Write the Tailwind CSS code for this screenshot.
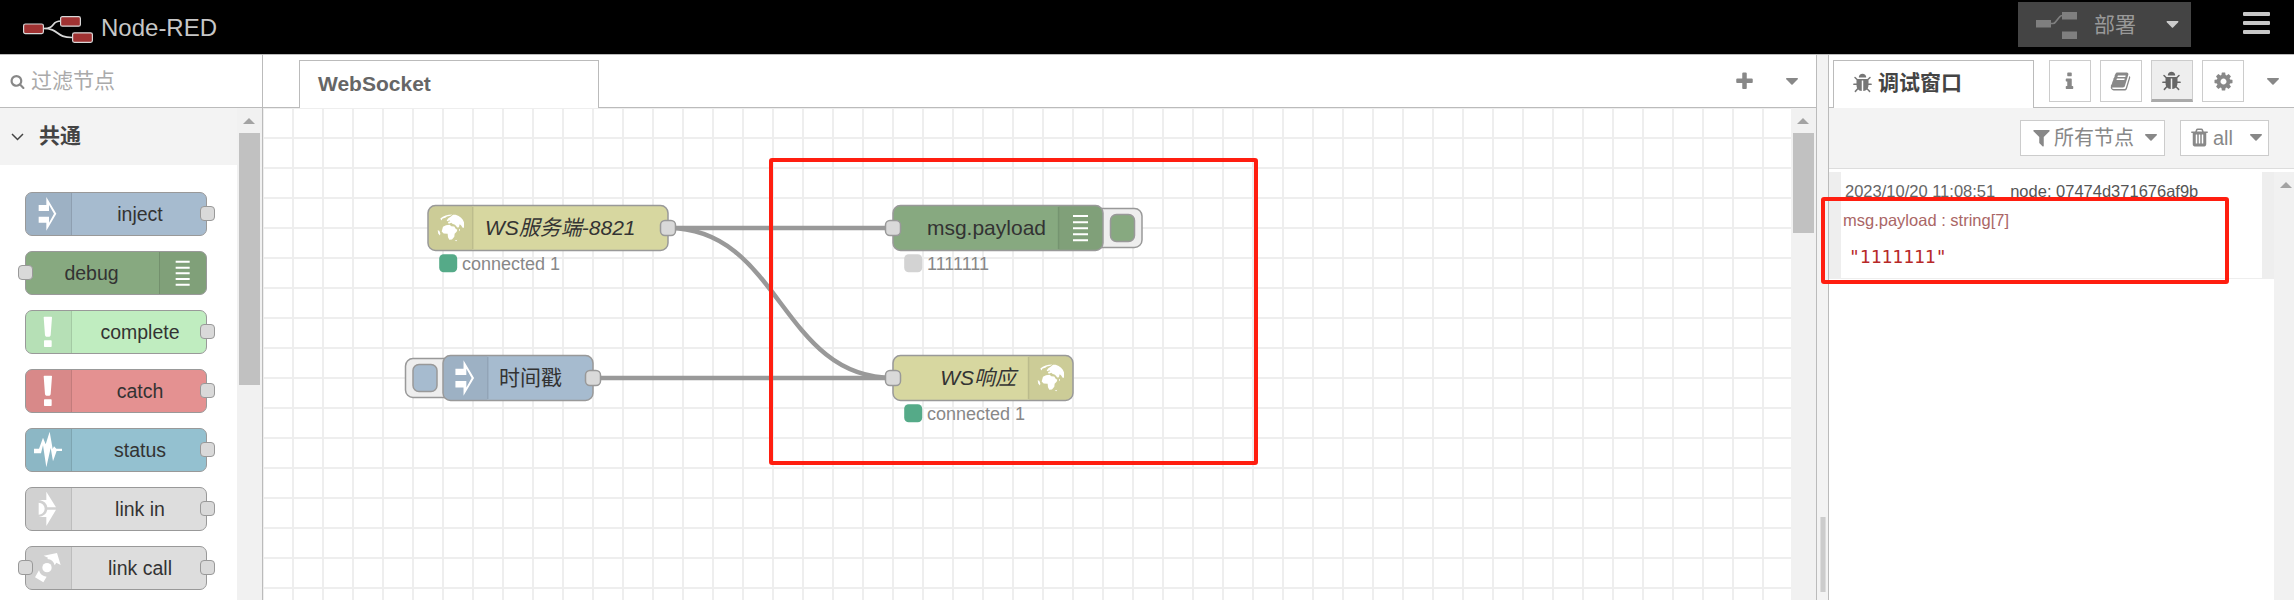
<!DOCTYPE html>
<html lang="zh-CN">
<head>
<meta charset="utf-8">
<title>Node-RED</title>
<script src="https://cdn.jsdelivr.net/npm/@tailwindcss/browser@4"></script>
</head>
<body class="w-[2294px] h-[600px] overflow-hidden bg-white font-['Liberation_Sans','Noto_Sans_CJK_SC',sans-serif] text-[21px] text-[#888]">

<!-- shared icon shapes -->
<svg class="hidden">
  <symbol id="search" viewBox="0 0 1792 1792"><path d="M1216 832q0-185-131.5-316.5t-316.5-131.5-316.5 131.5-131.5 316.5 131.5 316.5 316.5 131.5 316.5-131.5 131.5-316.5zm512 832q0 52-38 90t-90 38q-54 0-90-38l-343-342q-179 124-399 124-143 0-273.5-55.5t-225-150-150-225-55.5-273.5 55.5-273.5 150-225 225-150 273.5-55.5 273.5 55.5 225 150 150 225 55.5 273.5q0 220-124 399l343 343q37 37 37 90z"/></symbol>
  <symbol id="bug" viewBox="0 0 1792 1792"><path d="M1696 960q0 26-19 45t-45 19h-224q0 171-67 290l208 209q19 19 19 45t-19 45q-18 19-45 19t-45-19l-198-197q-5 5-15 13t-42 28.5-65 36.5-82 29-97 13v-896h-128v896q-51 0-101.5-13.5t-87-33-66-39-43.5-32.5l-15-14-183 207q-20 21-48 21-24 0-43-16-19-18-20.5-44.5t15.5-46.5l202-227q-58-114-58-274h-224q-26 0-45-19t-19-45 19-45 45-19h224v-294l-173-173q-19-19-19-45t19-45 45-19 45 19l173 173h844l173-173q19-19 45-19t45 19 19 45-19 45l-173 173v294h224q26 0 45 19t19 45zm-480-576h-640q0-133 93.5-226.5t226.5-93.5 226.5 93.5 93.5 226.5z"/></symbol>
  <symbol id="cog" viewBox="0 0 1792 1792"><path d="M1152 896q0-106-75-181t-181-75-181 75-75 181 75 181 181 75 181-75 75-181zm512-109v222q0 12-8 23t-20 13l-185 28q-19 54-39 91 35 50 107 138 10 12 10 25t-9 23q-27 37-99 108t-94 71q-12 0-26-9l-138-108q-44 23-91 38-16 136-29 186-7 28-36 28h-222q-14 0-24.5-8.5t-11.5-21.5l-28-184q-49-16-90-37l-141 107q-10 9-25 9-14 0-25-11-126-114-165-168-7-10-7-23 0-12 8-23 15-21 51-66.5t54-70.5q-27-50-41-99l-183-27q-13-2-21-12.5t-8-23.5v-222q0-12 8-23t19-13l186-28q14-46 39-92-40-57-107-138-10-12-10-24 0-10 9-23 26-36 98.5-107.5t94.5-71.5q13 0 26 10l138 107q44-23 91-38 16-136 29-186 7-28 36-28h222q14 0 24.5 8.5t11.5 21.5l28 184q49 16 90 37l142-107q9-9 24-9 13 0 25 10 129 119 165 170 7 8 7 22 0 12-8 23-15 21-51 66.5t-54 70.5q26 50 41 98l183 28q13 2 21 12.5t8 23.5z"/></symbol>
  <symbol id="info" viewBox="0 0 1792 1792"><path d="M1216 1344v128q0 26-19 45t-45 19h-512q-26 0-45-19t-19-45v-128q0-26 19-45t45-19h64v-384h-64q-26 0-45-19t-19-45v-128q0-26 19-45t45-19h384q26 0 45 19t19 45v576h64q26 0 45 19t19 45zm-128-1152v192q0 26-19 45t-45 19h-256q-26 0-45-19t-19-45v-192q0-26 19-45t45-19h256q26 0 45 19t19 45z"/></symbol>
  <symbol id="book" viewBox="0 0 1792 1792"><path d="M1703 478q40 57 18 129l-275 906q-19 64-76.5 107.5t-122.5 43.5h-923q-77 0-148.5-53.5t-99.5-131.5q-24-67-2-127 0-4 3-27t4-37q1-8-3-21.5t-3-19.5q2-11 8-21t16.5-23.5 16.5-23.5q23-38 45-91.5t30-91.5q3-10 .5-30t-.5-28q3-11 17-28t17-23q21-36 42-92t25-90q1-9-2.5-32t.5-28q4-13 22-30.5t22-22.5q19-26 42.5-84.5t27.5-96.5q1-8-3-25.5t-2-26.5q2-8 9-18t18-23 17-21q8-12 16.5-30.5t15-35 16-36 19.5-32 26.5-23.5 36-11.5 47.5 5.5l-1 3q38-9 51-9h761q74 0 114 56t18 130l-274 906q-36 119-71.5 153.5t-128.5 34.5h-869q-27 0-38 15-11 16-1 43 24 70 144 70h923q29 0 56-15.5t35-41.5l300-987q7-22 5-57 38 15 59 43zm-1064 2q-4 13 2 22.5t20 9.5h608q13 0 25.5-9.5t16.5-22.5l21-64q4-13-2-22.5t-20-9.5h-608q-13 0-25.5 9.5t-16.5 22.5zm-83 256q-4 13 2 22.5t20 9.5h608q13 0 25.5-9.5t16.5-22.5l21-64q4-13-2-22.5t-20-9.5h-608q-13 0-25.5 9.5t-16.5 22.5z"/></symbol>
  <symbol id="filter" viewBox="0 0 1792 1792"><path d="M1595 295q17 41-14 70l-493 493v742q0 42-39 59-13 5-25 5-27 0-45-19l-256-256q-19-19-19-45v-486l-493-493q-31-29-14-70 17-39 59-39h1280q42 0 59 39z"/></symbol>
  <symbol id="trash" viewBox="0 0 1792 1792"><path d="M704 1376v-704q0-14-9-23t-23-9h-64q-14 0-23 9t-9 23v704q0 14 9 23t23 9h64q14 0 23-9t9-23zm256 0v-704q0-14-9-23t-23-9h-64q-14 0-23 9t-9 23v704q0 14 9 23t23 9h64q14 0 23-9t9-23zm256 0v-704q0-14-9-23t-23-9h-64q-14 0-23 9t-9 23v704q0 14 9 23t23 9h64q14 0 23-9t9-23zm-544-992h448l-48-117q-7-9-17-11h-317q-10 2-17 11zm928 32v64q0 14-9 23t-23 9h-96v948q0 83-47 143.5t-113 60.5h-832q-66 0-113-58.5t-47-141.5v-952h-96q-14 0-23-9t-9-23v-64q0-14 9-23t23-9h309l70-167q15-37 54-63t79-26h320q40 0 79 26t54 63l70 167h309q14 0 23 9t9 23z"/></symbol>
  <symbol id="plus" viewBox="0 0 1792 1792"><path d="M1600 736v192q0 40-28 68t-68 28h-416v416q0 40-28 68t-68 28h-192q-40 0-68-28t-28-68v-416h-416q-40 0-68-28t-28-68v-192q0-40 28-68t68-28h416v-416q0-40 28-68t68-28h192q40 0 68 28t28 68v416h416q40 0 68 28t28 68z"/></symbol>
  <symbol id="caret" viewBox="0 0 12 7"><path d="M.6 0h10.8q.9.5.3 1.2L6.6 6.5q-.6.6-1.2 0L.3 1.2Q-.3.5.6 0z"/></symbol>
  <symbol id="up" viewBox="0 0 12 6"><path d="M6 0l6 6H0z"/></symbol>
  <!-- node icons, 135x132 units per 45x44 box -->
  <symbol id="n-inject" viewBox="0 0 135 132"><path d="M41 39h23V15l30 50-30 51V92H41V74h31v18l15-27-15-26v18H41z"/></symbol>
  <symbol id="n-debug" viewBox="0 0 135 132"><path d="M44 29h42v6H44zM44 47h42v6H44zM44 64h42v6H44zM44 81h42v6H44zM44 98h42v6H44z"/></symbol>
  <symbol id="n-alert" viewBox="0 0 135 132"><path d="M56 22q0-2 2-2h21q2 0 2 2l-4 54q-1 4-4 4h-9q-3 0-4-4zM59 91h19q2 0 2 2v16q0 2-2 2H59q-2 0-2-2V93q0-2 2-2z"/></symbol>
  <symbol id="n-status" viewBox="0 0 135 132"><path d="M27 62h15l12-33 8 20 12-38 9 52 4-8 7 7h17v7H95l-11 31-7-40-13 58-10-66-6 24H27z"/></symbol>
  <symbol id="n-linkin" viewBox="0 0 135 132"><path d="M64 14l29 47H67a27 27 0 0 0-21-21l-5-1h23zM41 47a18 18 0 0 1 0 36zM64 117l29-49H67a27 27 0 0 1-26 22h23z"/></symbol>
  <symbol id="n-linkcall" viewBox="0 0 135 132"><path d="M56 29l40-8 11 36-13-7-5 8a25 25 0 0 0-22-19l2-4zM42 73a25 25 0 0 0 23 19l-10 17-25-15z"/><circle cx="66" cy="65" r="14"/></symbol>
  <symbol id="n-globe" viewBox="0 0 82 86">
    <path d="M10 15Q24 3 46 3l-6 4-10 2-5 4-8 2-4 6z"/>
    <path d="M48 4h8q20 7 25 22 1 6 0 17h-4l-5-8-4-3-2 9-5 1-7-8-8-3-3-3-5 2-5-1 1-4 6-2-3-3-5 3-3-2 5-7 7-4z"/>
    <path d="M18 40l9-5 11-1 5 4 9 1 4 7 5 3-2 6-6 6-1 9-7 8-8 1-4-8-1-10-12-1-6-6z"/>
    <path d="M2 50l5 2 3 8-1 6-5-5zM53 82l8-3-3 4zM66 46l3 2-1 5-2-2z"/>
  </symbol>
</svg>

<header class="flex h-[54px] items-start justify-between bg-black">
  <div class="flex items-center pl-[23px] pt-[10px]">
    <svg class="mt-1 h-[28px] w-[71px]" viewBox="0 0 71 28"><path d="M20 12.5C34 12.5 27 5 38 5M20 12.5C37 12.5 32 21.500 49 21.500" fill="none" stroke="#d8d8d8" stroke-width="1.7"/><g fill="#a03232" stroke="#d8d8d8" stroke-width="1.200"><rect x=".6" y="8" width="19.800" height="9.600" rx="1.800"/><rect x="37.600" y=".6" width="19.800" height="9.600" rx="1.800"/><rect x="49.600" y="16.800" width="19.800" height="9.600" rx="1.800"/></g></svg>
    <span class="mt-[1px] ml-[7px] text-[24px] leading-[34px] text-[#c7c7c7]">Node-RED</span>
  </div>
  <div class="flex pt-[2px]">
    <div class="flex h-[45px] w-[173px] items-center bg-[#444] text-[#999]">
      <svg class="ml-[18px] h-[28px] w-[41px]" viewBox="0 0 41 28"><path d="M14 12.500h3q1.500 0 2.500-1.500l4-5q1-1.500 3-1.500h2" fill="none" stroke="#7f7f7f" stroke-width="1.700"/><path d="M0 9h15v7.500H0zM26 1h15v7.500H26zM26 20.500h15V28H26z" fill="#7f7f7f"/></svg>
      <span class="ml-[17px] leading-[30px]">部署</span>
      <svg class="ml-[30px] h-[7px] w-[13px] fill-[#ccc]"><use href="#caret"/></svg>
    </div>
    <div class="mr-[24px] ml-[52px] mt-[10px] flex w-[27px] flex-col gap-[5px]">
      <i class="h-[4px] rounded-[1px] bg-[#c7c7c7]"></i><i class="h-[4px] rounded-[1px] bg-[#c7c7c7]"></i><i class="h-[4px] rounded-[1px] bg-[#c7c7c7]"></i>
    </div>
  </div>
</header>

<main class="flex h-[546px] border-t border-[#bbb]">
  <!-- palette -->
  <aside class="flex w-[263px] flex-col border-r border-[#bbb]">
    <div class="flex h-[53px] items-center border-b border-[#bbb] pl-[10px]">
      <svg class="h-[15px] w-[15px] fill-[#888]"><use href="#search"/></svg>
      <span class="ml-[6px] leading-[30px] text-[#aaa]">过滤节点</span>
    </div>
    <div class="flex grow">
      <div class="w-[237px]">
        <div class="flex h-[57px] items-center bg-[#f3f3f3] pl-[11px]">
          <svg class="mt-[1px] h-[8px] w-[13px]" viewBox="0 0 13 8"><path d="M1 1l5.500 5.500L12 1" fill="none" stroke="#444" stroke-width="1.500"/></svg>
          <span class="-mt-[2px] ml-[15px] font-bold leading-[30px] text-[#444]">共通</span>
        </div>
        <div class="flex flex-col gap-[15px] pt-[27px] pl-[25px] text-[19.5px] leading-[42px] text-[#333]">
          <div class="relative flex h-[44px] w-[182px] rounded-[7px] border border-[#999] bg-[#a6bbcf]">
            <div class="w-[46px] rounded-l-[6px] border-r border-black/10 bg-black/5"><svg class="-mt-px -ml-px h-[44px] w-[45px] fill-white"><use href="#n-inject"/></svg></div>
            <span class="grow pr-[1px] pl-[3px] text-center">inject</span>
            <i class="absolute top-[13px] left-[174px] size-[15px] rounded-[4px] border border-[#999] bg-[#d9d9d9]"></i>
          </div>
          <div class="relative flex h-[44px] w-[182px] rounded-[7px] border border-[#999] bg-[#87a980]">
            <span class="grow pr-[2px] text-center">debug</span>
            <div class="w-[47px] rounded-r-[6px] border-l border-black/10 bg-black/5"><svg class="-mt-px ml-px h-[44px] w-[45px] fill-white"><use href="#n-debug"/></svg></div>
            <i class="absolute top-[13px] -left-[8px] size-[15px] rounded-[4px] border border-[#999] bg-[#d9d9d9]"></i>
          </div>
          <div class="relative flex h-[44px] w-[182px] rounded-[7px] border border-[#999] bg-[#c0edc0]">
            <div class="w-[46px] rounded-l-[6px] border-r border-black/10 bg-black/5"><svg class="-mt-px -ml-px h-[44px] w-[45px] fill-white"><use href="#n-alert"/></svg></div>
            <span class="grow pr-[1px] pl-[3px] text-center">complete</span>
            <i class="absolute top-[13px] left-[174px] size-[15px] rounded-[4px] border border-[#999] bg-[#d9d9d9]"></i>
          </div>
          <div class="relative flex h-[44px] w-[182px] rounded-[7px] border border-[#999] bg-[#e49191]">
            <div class="w-[46px] rounded-l-[6px] border-r border-black/10 bg-black/5"><svg class="-mt-px -ml-px h-[44px] w-[45px] fill-white"><use href="#n-alert"/></svg></div>
            <span class="grow pr-[1px] pl-[3px] text-center">catch</span>
            <i class="absolute top-[13px] left-[174px] size-[15px] rounded-[4px] border border-[#999] bg-[#d9d9d9]"></i>
          </div>
          <div class="relative flex h-[44px] w-[182px] rounded-[7px] border border-[#999] bg-[#94c1d0]">
            <div class="w-[46px] rounded-l-[6px] border-r border-black/10 bg-black/5"><svg class="-mt-px -ml-px h-[44px] w-[45px] fill-white"><use href="#n-status"/></svg></div>
            <span class="grow pr-[1px] pl-[3px] text-center">status</span>
            <i class="absolute top-[13px] left-[174px] size-[15px] rounded-[4px] border border-[#999] bg-[#d9d9d9]"></i>
          </div>
          <div class="relative flex h-[44px] w-[182px] rounded-[7px] border border-[#999] bg-[#ddd]">
            <div class="w-[46px] rounded-l-[6px] border-r border-black/10 bg-black/5"><svg class="-mt-px -ml-px h-[44px] w-[45px] fill-white"><use href="#n-linkin"/></svg></div>
            <span class="grow pr-[1px] pl-[3px] text-center">link in</span>
            <i class="absolute top-[13px] left-[174px] size-[15px] rounded-[4px] border border-[#999] bg-[#d9d9d9]"></i>
          </div>
          <div class="relative flex h-[44px] w-[182px] rounded-[7px] border border-[#999] bg-[#ddd]">
            <div class="w-[46px] rounded-l-[6px] border-r border-black/10 bg-black/5"><svg class="-mt-px -ml-px h-[44px] w-[45px] fill-white"><use href="#n-linkcall"/></svg></div>
            <span class="grow pr-[1px] pl-[3px] text-center">link call</span>
            <i class="absolute top-[13px] -left-[8px] size-[15px] rounded-[4px] border border-[#999] bg-[#d9d9d9]"></i>
            <i class="absolute top-[13px] left-[174px] size-[15px] rounded-[4px] border border-[#999] bg-[#d9d9d9]"></i>
          </div>
        </div>
      </div>
      <div class="flex w-[25px] flex-col bg-[#f1f1f1] pt-[10px] pl-[2px]">
        <svg class="ml-[4px] h-[6px] w-[12px] fill-[#a3a3a3]"><use href="#up"/></svg>
        <div class="mt-[9px] h-[252px] w-[21px] bg-[#c1c1c1]"></div>
      </div>
    </div>
  </aside>

  <!-- workspace -->
  <section class="flex w-[1554px] flex-col border-r border-[#bbb]">
    <div class="flex h-[53px] items-end">
      <div class="h-[53px] w-[36px] border-b border-[#bbb]"></div>
      <div class="h-[48px] w-[300px] border border-b-0 border-[#bbb] pl-[18px] font-bold leading-[45px] text-[#666]">WebSocket</div>
      <div class="flex h-[53px] grow items-center justify-end border-b border-[#bbb]">
        <svg class="mt-[1px] h-[21px] w-[21px] fill-[#888]"><use href="#plus"/></svg>
        <svg class="mt-[1px] mr-[18px] ml-[31px] h-[7px] w-[12px] fill-[#888]"><use href="#caret"/></svg>
      </div>
    </div>
    <div class="flex h-[492px]">
      <svg class="h-[492px] w-[1528px] text-[21px]" viewBox="263 108 1528 492">
        <defs>
          <pattern id="grid" x="262" y="107" width="30" height="30" patternUnits="userSpaceOnUse"><path class="fill-[#eee]" d="M0 0h30v2H0zM0 0h2v30H0z"/></pattern>
        </defs>
        <rect x="263" y="108" width="1528" height="492" fill="url(#grid)"/>
        <g class="fill-none stroke-[#999]" stroke-width="4.500">
          <path d="M668 228H893"/><path d="M668 228C780.500 228 780.500 378 893 378"/><path d="M593 378H893"/>
        </g>
        <!-- websocket in -->
        <rect x="428" y="205.500" width="240" height="45" rx="7.500" class="fill-[#d7d7a0] stroke-[#999]" stroke-width="1.500"/>
        <path d="M472.500 206.300H435.500a6.700 6.700 0 0 0-6.700 6.700v30a6.700 6.700 0 0 0 6.700 6.700h37z" class="fill-black/5"/><path d="M472.800 207v42" class="stroke-black/10" stroke-width="1.500"/>
        <use href="#n-globe" x="437" y="213.500" width="27.300" height="28.700" class="fill-white"/>
        <text x="485" y="235" class="fill-[#333] italic">WS服务端-8821</text>
        <!-- inject -->
        <rect x="405.500" y="358.500" width="48" height="39" rx="7.500" class="fill-[#eee] stroke-[#999]" stroke-width="1.500"/>
        <rect x="413" y="364.500" width="24" height="27" rx="6" class="fill-[#a6bbcf] stroke-[#999]" stroke-width="1.500"/>
        <rect x="443" y="355.500" width="150" height="45" rx="7.500" class="fill-[#a6bbcf] stroke-[#999]" stroke-width="1.500"/>
        <path d="M487.500 356.300H450.500a6.700 6.700 0 0 0-6.700 6.700v30a6.700 6.700 0 0 0 6.700 6.700h37z" class="fill-black/5"/><path d="M487.800 357v42" class="stroke-black/10" stroke-width="1.500"/>
        <use href="#n-inject" x="441" y="355" width="47.500" height="46.500" class="fill-white"/>
        <text x="499" y="385" class="fill-[#333]">时间戳</text>
        <!-- debug -->
        <rect x="1093" y="208.500" width="49" height="39" rx="7.500" class="fill-[#eee] stroke-[#999]" stroke-width="1.500"/>
        <rect x="1110.500" y="214.500" width="24" height="27" rx="6" class="fill-[#87a980] stroke-[#999]" stroke-width="1.500"/>
        <rect x="893" y="205.500" width="210" height="45" rx="7.500" class="fill-[#87a980] stroke-[#999]" stroke-width="1.500"/>
        <path d="M1058.500 206.300h37a6.700 6.700 0 0 1 6.700 6.700v30a6.700 6.700 0 0 1-6.700 6.700h-37z" class="fill-black/5"/><path d="M1058.500 207v42" class="stroke-black/10" stroke-width="1.500"/>
        <path class="fill-white" d="M1073 215h15v2h-15zM1073 221.300h15v2h-15zM1073 227.300h15v2h-15zM1073 233.300h15v2h-15zM1073 239.300h15v2h-15z"/>
        <text x="1046" y="235" text-anchor="end" class="fill-[#333]">msg.payload</text>
        <!-- websocket out -->
        <rect x="893" y="355.500" width="180" height="45" rx="7.500" class="fill-[#d7d7a0] stroke-[#999]" stroke-width="1.500"/>
        <path d="M1028.500 356.300h37a6.700 6.700 0 0 1 6.700 6.700v30a6.700 6.700 0 0 1-6.700 6.700h-37z" class="fill-black/5"/><path d="M1028.500 357v42" class="stroke-black/10" stroke-width="1.500"/>
        <use href="#n-globe" x="1037" y="363.500" width="27.300" height="28.700" class="fill-white"/>
        <text x="1016" y="385" text-anchor="end" class="fill-[#333] italic">WS响应</text>
        <!-- ports -->
        <g class="fill-[#d9d9d9] stroke-[#999]" stroke-width="1.500">
          <rect x="660.500" y="220.500" width="15" height="15" rx="4.500"/><rect x="585.500" y="370.500" width="15" height="15" rx="4.500"/>
          <rect x="885.500" y="220.500" width="15" height="15" rx="4.500"/><rect x="885.500" y="370.500" width="15" height="15" rx="4.500"/>
        </g>
        <!-- status -->
        <g class="fill-[#888] text-[18px]">
          <rect x="439.200" y="254.200" width="18" height="18" rx="4.500" class="fill-[#5a8]"/><text x="462" y="270">connected 1</text>
          <rect x="904.200" y="254.200" width="18" height="18" rx="4.500" class="fill-[#d3d3d3]"/><text x="927" y="270">1111111</text>
          <rect x="904.200" y="404.200" width="18" height="18" rx="4.500" class="fill-[#5a8]"/><text x="927" y="420">connected 1</text>
        </g>
      </svg>
      <div class="flex w-[25px] flex-col bg-[#f1f1f1] pt-[10px] pl-[2px]">
        <svg class="ml-[4px] h-[6px] w-[12px] fill-[#a3a3a3]"><use href="#up"/></svg>
        <div class="mt-[9px] h-[100px] w-[21px] bg-[#c1c1c1]"></div>
      </div>
    </div>
  </section>

  <!-- splitter -->
  <div class="w-[12px] border-r border-[#bbb] bg-[#f3f3f3] pt-[462px] pl-[3px]"><div class="h-[75px] w-[6px] border-x border-[#ddd] bg-[#ccc]"></div></div>

  <!-- sidebar -->
  <aside class="flex w-[465px] flex-col">
    <div class="flex h-[53px] items-end">
      <div class="h-[53px] w-[4px] border-b border-[#bbb]"></div>
      <div class="flex h-[48px] w-[201px] items-center border border-b-0 border-[#bbb] pb-[3px] pl-[18px]">
        <svg class="h-[21px] w-[21px] fill-[#777]"><use href="#bug"/></svg>
        <span class="ml-[5px] font-bold leading-[30px] text-[#444]">调试窗口</span>
      </div>
      <div class="flex h-[53px] grow items-center gap-[9px] border-b border-[#bbb] pl-[15px]">
        <div class="flex size-[42px] items-center justify-center border border-[#ccc] pr-[1px]"><svg class="size-[21px] fill-[#888]"><use href="#info"/></svg></div>
        <div class="flex size-[42px] items-center justify-center border border-[#ccc] pr-[1px]"><svg class="size-[21px] fill-[#888]"><use href="#book"/></svg></div>
        <div class="flex size-[42px] items-center justify-center border border-b-3 border-[#ccc] border-b-[#aaa] bg-[#eee] pr-[1px]"><svg class="mt-[2px] size-[21px] fill-[#666]"><use href="#bug"/></svg></div>
        <div class="flex size-[42px] items-center justify-center border border-[#ccc]"><svg class="size-[21px] fill-[#888]"><use href="#cog"/></svg></div>
        <svg class="ml-[14px] h-[7px] w-[12px] fill-[#888]"><use href="#caret"/></svg>
      </div>
    </div>
    <div class="flex h-[61px] items-start justify-end gap-[15px] border-b border-[#ddd] bg-[#f3f3f3] pt-[12px] pr-[25px]">
      <div class="flex h-[36px] w-[145px] items-center border border-[#ccc] bg-white pb-[1px] pl-[10px] text-[20px]">
        <svg class="size-[21px] fill-[#888]"><use href="#filter"/></svg><span class="ml-[2px] leading-[28px]">所有节点</span>
        <svg class="ml-[11px] h-[7px] w-[12px] fill-[#888]"><use href="#caret"/></svg>
      </div>
      <div class="flex h-[36px] w-[89px] items-center border border-[#ccc] bg-white pb-[1px] pl-[8px] text-[20px]">
        <svg class="size-[21px] fill-[#888]"><use href="#trash"/></svg><span class="ml-[3px] leading-[28px]">all</span>
        <svg class="ml-[17px] h-[7px] w-[12px] fill-[#888]"><use href="#caret"/></svg>
      </div>
    </div>
    <div class="flex grow pt-[3px]">
      <div class="w-[445px]">
        <div class="h-[107px] border-x-[12px] border-b border-[#eee] pt-[9px] text-[16.5px]">
          <div class="flex gap-[15px] pl-[4px] leading-[20px] whitespace-nowrap"><span class="text-[#666]">2023/10/20 11:08:51</span><span class="text-[#555]">node: 07474d371676af9b</span></div>
          <div class="mt-[9px] pl-[2px] leading-[20px] text-[#a66]">msg.payload : string[7]</div>
          <div class="mt-[15px] pl-[8px] font-['DejaVu_Sans_Mono',monospace] text-[18px] leading-[24px] text-[#b72828]">"1111111"</div>
        </div>
      </div>
      <div class="w-[20px] bg-[#f1f1f1] pt-[10px] pl-[6px]"><svg class="h-[6px] w-[12px] fill-[#a3a3a3]"><use href="#up"/></svg></div>
    </div>
  </aside>
</main>

<!-- highlight frames -->
<div class="absolute top-[158px] left-[769px] h-[307px] w-[489px] rounded-[3px] border-4 border-[#ff1e10]"></div>
<div class="absolute top-[197px] left-[1821px] h-[87px] w-[408px] rounded-[3px] border-4 border-[#ff1e10]"></div>
</body>
</html>
